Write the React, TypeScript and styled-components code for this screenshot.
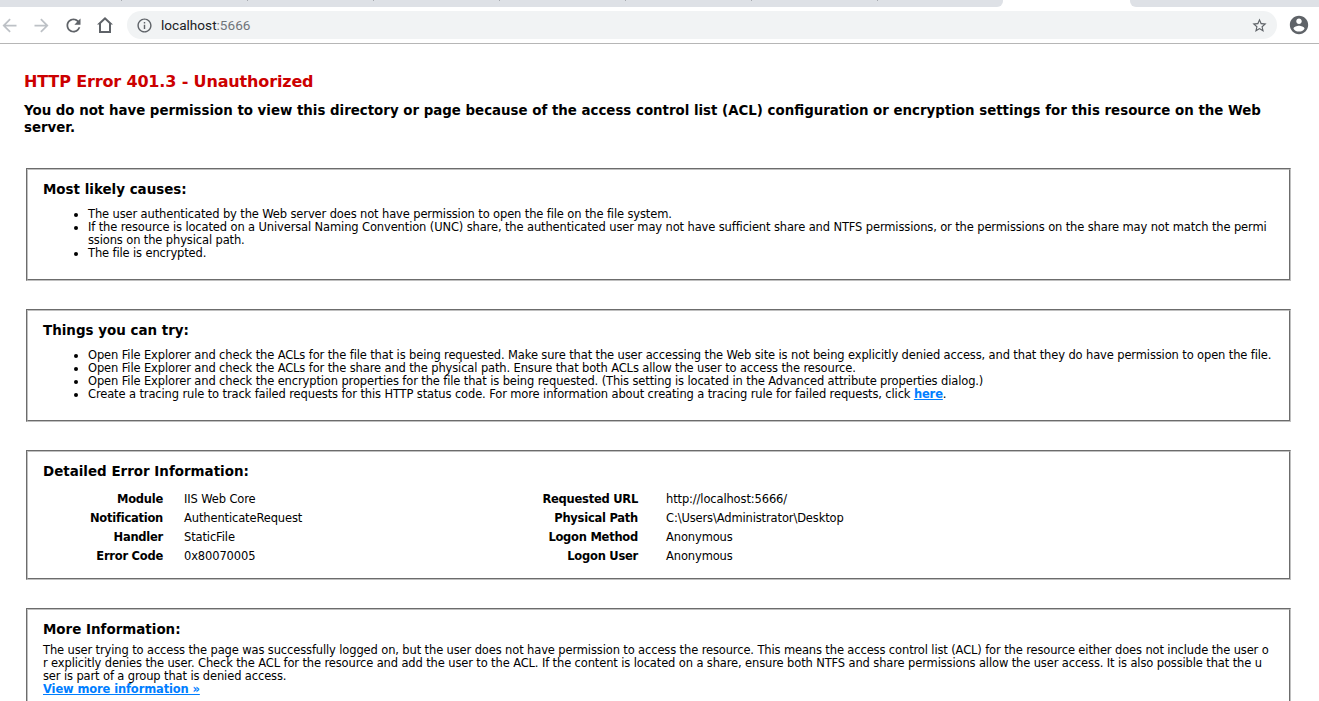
import React from 'react';
import styled, { createGlobalStyle } from 'styled-components';

const GlobalStyle = createGlobalStyle`
  html, body {
    margin: 0;
    padding: 0;
    background: #fff;
    overflow: hidden;
  }
  body {
    font-family: "DejaVu Sans", Verdana, sans-serif;
    font-size: 11.5px;
    letter-spacing: -0.13px;
    line-height: 13px;
    color: #000;
  }
`;

const Page = styled.div`
  width: 1319px;
  height: 701px;
  overflow: hidden;
`;

// Browser chrome
const TabStrip = styled.div`
  height: 7px;
  display: flex;
  justify-content: space-between;
`;

// tick marks are the tab separators, one every 126px
const TabsLeft = styled.div`
  width: 1003px;
  background:
    repeating-linear-gradient(90deg, transparent 0 121px, #a8abb0 121px 122px, transparent 122px 126px) top left / 100% 1px no-repeat,
    #dee1e6;
  border-bottom-right-radius: 6px;
`;

const TabsRight = styled.div`
  width: 189px;
  background: #dee1e6;
  border-bottom-left-radius: 6px;
`;

const Toolbar = styled.div`
  height: 37px;
  box-sizing: border-box;
  border-bottom: 1px solid #b6b6b6;
  display: flex;
  align-items: center;
  padding-right: 9px;
`;

const NavGroup = styled.div`
  display: flex;
  margin-left: -7px;
  margin-right: 6px;
`;

const NavButton = styled.span<{ $disabled?: boolean }>`
  width: 32px;
  display: flex;
  align-items: center;
  justify-content: center;
  color: ${(p) => (p.$disabled ? '#bdc1c6' : '#5f6368')};
`;

const ProfileButton = styled.span`
  display: flex;
  margin-left: 11px;
  color: #5f6368;
`;

const Omnibox = styled.div`
  flex: 1;
  height: 28px;
  border-radius: 14px;
  background: #f1f3f4;
  display: flex;
  align-items: center;
  padding: 0 9px;
  color: #5f6368;
`;

const Url = styled.span`
  flex: 1;
  margin-left: 8px;
  font-family: Roboto, "Liberation Sans", sans-serif;
  font-size: 13.6px;
  letter-spacing: 0;
  color: #202124;
`;

const UrlPort = styled.span`
  color: #70757a;
`;

// Error page
const Content = styled.main`
  padding: 28px 28px 0 24px;
`;

const Title = styled.h2`
  margin: 0;
  font-size: 16px;
  letter-spacing: -0.15px;
  line-height: 20px;
  color: #c00;
`;

const Subtitle = styled.h3`
  margin: 10px 0 0;
  font-size: 13.36px;
  letter-spacing: 0;
  line-height: 17px;
  color: #000;
`;

const Panels = styled.div`
  margin-top: 32px;
`;

const Panel = styled.fieldset<{ $h: number }>`
  margin: 0 0 28px 2px;
  padding: 0 17px 0 15px;
  min-inline-size: 0;
  border: 2px groove #c0c0c0;
  word-break: break-all;
  height: ${(p) => p.$h}px;
  box-sizing: border-box;
`;

const PanelTitle = styled.div`
  margin: 12px 0 6px;
  font-size: 13.45px;
  letter-spacing: 0;
  line-height: 16px;
  font-weight: bold;
`;

// margin collapses with the 6px under PanelTitle, so these are the full gap
const Causes = styled.ul`
  margin: 10px 0 0;
  padding: 0 0 0 45px;
`;

const DetailColumns = styled.div`
  display: flex;
  margin-top: 13px;
  word-break: normal;
`;

const InfoGrid = styled.dl<{ $width?: number; $label: number; $gap: number }>`
  margin: 0;
  width: ${(p) => (p.$width ? `${p.$width}px` : 'auto')};
  display: grid;
  grid-template-columns: ${(p) => p.$label}px 1fr;
  column-gap: ${(p) => p.$gap}px;
  row-gap: 6px;
`;

const InfoLabel = styled.dt`
  font-weight: bold;
  letter-spacing: -0.25px;
  text-align: right;
  white-space: nowrap;
`;

const InfoValue = styled.dd`
  margin: 0;
`;

const Link = styled.a`
  color: #007eff;
  font-weight: bold;
  text-decoration: underline;
`;

const ArrowLeftIcon = () => (
  <svg width="21" height="21" viewBox="0 0 24 24" fill="currentColor">
    <path d="M20 11H7.83l5.59-5.59L12 4l-8 8 8 8 1.41-1.41L7.83 13H20v-2z" />
  </svg>
);

const ArrowRightIcon = () => (
  <svg width="21" height="21" viewBox="0 0 24 24" fill="currentColor">
    <path d="M4 11h12.17l-5.59-5.59L12 4l8 8-8 8-1.41-1.41L16.17 13H4v-2z" />
  </svg>
);

const ReloadIcon = () => (
  <svg width="21" height="21" viewBox="0 0 24 24" fill="currentColor">
    <path d="M17.65 6.35C16.2 4.9 14.21 4 12 4c-4.42 0-7.99 3.58-7.99 8s3.57 8 7.99 8c3.73 0 6.84-2.55 7.73-6h-2.08c-.82 2.33-3.04 4-5.65 4-3.31 0-6-2.69-6-6s2.69-6 6-6c1.66 0 3.14.69 4.22 1.78L13 11h7V4l-2.35 2.35z" />
  </svg>
);

const HomeIcon = () => (
  <svg width="16" height="16" viewBox="0 0 16 16" fill="currentColor">
    <path d="M8 0L0 7.5h2V16h12V7.5h2L8 0zm4 14H4V6.6l4-3.8 4 3.8V14z" />
  </svg>
);

const InfoIcon = () => (
  <svg width="17" height="17" viewBox="0 0 24 24" fill="currentColor">
    <path d="M11 7h2v2h-2V7zm0 4h2v6h-2v-6zm1-9C6.48 2 2 6.48 2 12s4.48 10 10 10 10-4.48 10-10S17.52 2 12 2zm0 18c-4.41 0-8-3.59-8-8s3.59-8 8-8 8 3.59 8 8-3.59 8-8 8z" />
  </svg>
);

const StarIcon = () => (
  <svg width="17" height="17" viewBox="0 0 24 24" fill="currentColor">
    <path d="M22 9.24l-7.19-.62L12 2 9.19 8.63 2 9.24l5.46 4.73L5.82 21 12 17.27 18.18 21l-1.63-7.03L22 9.24zM12 15.4l-3.76 2.27 1-4.28-3.32-2.88 4.38-.38L12 6.1l1.71 4.04 4.38.38-3.32 2.88 1 4.28L12 15.4z" />
  </svg>
);

const AccountIcon = () => (
  <svg width="22" height="22" viewBox="0 0 24 24" fill="currentColor">
    <path d="M12 2C6.48 2 2 6.48 2 12s4.48 10 10 10 10-4.48 10-10S17.52 2 12 2zm0 3c1.66 0 3 1.34 3 3s-1.34 3-3 3-3-1.34-3-3 1.34-3 3-3zm0 14.2c-2.5 0-4.71-1.28-6-3.22.03-1.99 4-3.08 6-3.08 1.99 0 5.97 1.09 6 3.08-1.29 1.94-3.5 3.22-6 3.22z" />
  </svg>
);

export default function App() {
  return (
    <Page>
      <GlobalStyle />
      <TabStrip>
        <TabsLeft />
        <TabsRight />
      </TabStrip>
      <Toolbar>
        <NavGroup>
          <NavButton $disabled><ArrowLeftIcon /></NavButton>
          <NavButton $disabled><ArrowRightIcon /></NavButton>
          <NavButton><ReloadIcon /></NavButton>
          <NavButton><HomeIcon /></NavButton>
        </NavGroup>
        <Omnibox>
          <InfoIcon />
          <Url>localhost<UrlPort>:5666</UrlPort></Url>
          <StarIcon />
        </Omnibox>
        <ProfileButton><AccountIcon /></ProfileButton>
      </Toolbar>
      <Content>
        <Title>HTTP Error 401.3 - Unauthorized</Title>
        <Subtitle>
          You do not have permission to view this directory or page because of the access control list (ACL) configuration or encryption settings for this resource on the Web server.
        </Subtitle>
        <Panels>
          <Panel $h={113}>
            <PanelTitle>Most likely causes:</PanelTitle>
            <Causes>
              <li>The user authenticated by the Web server does not have permission to open the file on the file system.</li>
              <li>If the resource is located on a Universal Naming Convention (UNC) share, the authenticated user may not have sufficient share and NTFS permissions, or the permissions on the share may not match the permissions on the physical path.</li>
              <li>The file is encrypted.</li>
            </Causes>
          </Panel>
          <Panel $h={113}>
            <PanelTitle>Things you can try:</PanelTitle>
            <Causes>
              <li>Open File Explorer and check the ACLs for the file that is being requested. Make sure that the user accessing the Web site is not being explicitly denied access, and that they do have permission to open the file.</li>
              <li>Open File Explorer and check the ACLs for the share and the physical path. Ensure that both ACLs allow the user to access the resource.</li>
              <li>Open File Explorer and check the encryption properties for the file that is being requested. (This setting is located in the Advanced attribute properties dialog.)</li>
              <li>Create a tracing rule to track failed requests for this HTTP status code. For more information about creating a tracing rule for failed requests, click <Link href="#">here</Link>.</li>
            </Causes>
          </Panel>
          <Panel $h={130}>
            <PanelTitle>Detailed Error Information:</PanelTitle>
            <DetailColumns>
              <InfoGrid $width={485} $label={120} $gap={21}>
                <InfoLabel>Module</InfoLabel><InfoValue>IIS Web Core</InfoValue>
                <InfoLabel>Notification</InfoLabel><InfoValue>AuthenticateRequest</InfoValue>
                <InfoLabel>Handler</InfoLabel><InfoValue>StaticFile</InfoValue>
                <InfoLabel>Error Code</InfoLabel><InfoValue>0x80070005</InfoValue>
              </InfoGrid>
              <InfoGrid $label={110} $gap={28}>
                <InfoLabel>Requested URL</InfoLabel><InfoValue>http://localhost:5666/</InfoValue>
                <InfoLabel>Physical Path</InfoLabel><InfoValue>C:\Users\Administrator\Desktop</InfoValue>
                <InfoLabel>Logon Method</InfoLabel><InfoValue>Anonymous</InfoValue>
                <InfoLabel>Logon User</InfoLabel><InfoValue>Anonymous</InfoValue>
              </InfoGrid>
            </DetailColumns>
          </Panel>
          <Panel $h={130}>
            <PanelTitle>More Information:</PanelTitle>
            The user trying to access the page was successfully logged on, but the user does not have permission to access the resource. This means the access control list (ACL) for the resource either does not include the user or explicitly denies the user. Check the ACL for the resource and add the user to the ACL. If the content is located on a share, ensure both NTFS and share permissions allow the user access. It is also possible that the u<br />ser is part of a group that is denied access.
            <br />
            <Link href="#">View more information »</Link>
          </Panel>
        </Panels>
      </Content>
    </Page>
  );
}
